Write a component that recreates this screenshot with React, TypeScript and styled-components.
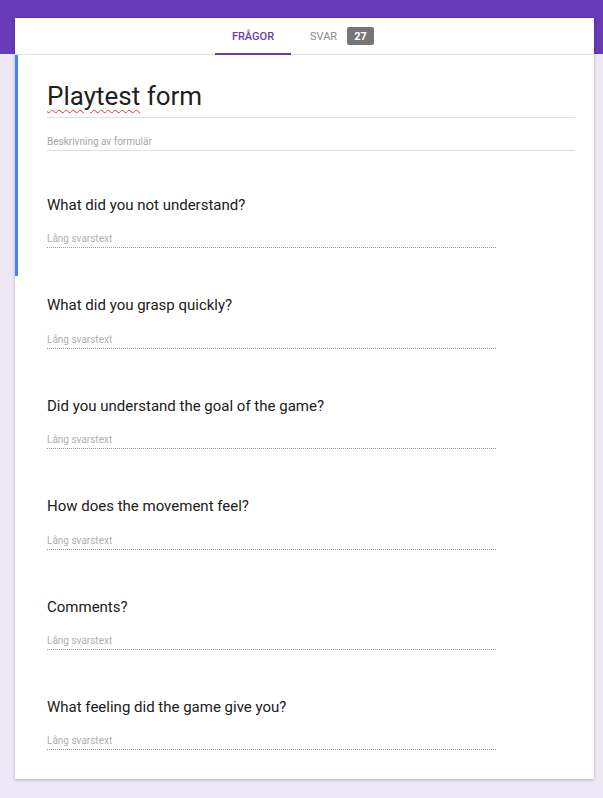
import React from 'react';
import styled, { createGlobalStyle } from 'styled-components';

const GlobalStyle = createGlobalStyle`
  html, body {
    margin: 0;
    padding: 0;
    background: #ede7f6;
    font-family: Roboto, "Noto Sans", "Liberation Sans", sans-serif;
  }
`;

const Page = styled.div`
  min-height: 798px;
  box-sizing: border-box;
  padding: 18px 9px 18px 15px;
  background: linear-gradient(#673ab7 0, #673ab7 54px, #ede7f6 54px);
`;

const Card = styled.div`
  width: 579px;
  background: #fff;
  box-shadow: 0 1px 3px rgba(0, 0, 0, 0.25);
  padding-bottom: 1px;
`;

const TabBar = styled.div`
  height: 36px;
  display: flex;
  justify-content: center;
  border-bottom: 1px solid #e0e0e0;
`;

const Tab = styled.div<{ active?: boolean; width: number }>`
  width: ${(p) => p.width}px;
  box-sizing: border-box;
  display: flex;
  align-items: center;
  justify-content: ${(p) => (p.active ? 'center' : 'flex-start')};
  padding: ${(p) => (p.active ? '0' : '0 0 0 19px')};
  gap: 10px;
  font-size: 11px;
  font-weight: ${(p) => (p.active ? 500 : 400)};
  text-transform: uppercase;
  color: ${(p) => (p.active ? '#673ab7' : '#8a8a8a')};
  border-bottom: 2px solid ${(p) => (p.active ? '#673ab7' : 'transparent')};
  margin-bottom: -1px;
  padding-top: 1px;
`;

const Badge = styled.span`
  display: inline-flex;
  align-items: center;
  justify-content: center;
  width: 27px;
  height: 18px;
  border-radius: 2px;
  background: #767676;
  color: #fff;
  font-size: 11px;
  font-weight: 700;
`;

const Highlighted = styled.div`
  border-left: 3px solid #4285f4;
`;

const Header = styled.div`
  padding: 23px 19px 25px 29px;
`;

const Title = styled.div`
  font-size: 26px;
  line-height: 36px;
  color: rgba(0, 0, 0, 0.9);
  padding-bottom: 3px;
  border-bottom: 1px solid #e0e0e0;
`;

const Misspelled = styled.span`
  text-decoration: underline wavy #e53935;
  text-decoration-thickness: 1px;
  text-underline-offset: 4px;
`;

const Description = styled.div`
  margin-top: 17px;
  font-size: 10px;
  line-height: 14px;
  color: #a6a6a6;
  padding-bottom: 1px;
  border-bottom: 1px solid #e0e0e0;
`;

const Question = styled.div<{ inset: number }>`
  padding: 19px 0 28px ${(p) => p.inset}px;
`;

const QuestionText = styled.div`
  font-size: 15px;
  line-height: 20px;
  color: #202020;
`;

const Answer = styled.div`
  width: 449px;
  margin-top: 17.4px;
  font-size: 10px;
  line-height: 14px;
  color: #b0b0b0;
  padding-bottom: 1px;
  border-bottom: 1px dotted #9a9a9a;
`;

const questions = [
  'What did you not understand?',
  'What did you grasp quickly?',
  'Did you understand the goal of the game?',
  'How does the movement feel?',
  'Comments?',
  'What feeling did the game give you?',
];

const QuestionItem: React.FC<{ text: string; inset: number }> = ({ text, inset }) => (
  <Question inset={inset}>
    <QuestionText>{text}</QuestionText>
    <Answer>Lång svarstext</Answer>
  </Question>
);

export default function App() {
  const [first, ...rest] = questions;
  return (
    <>
      <GlobalStyle />
      <Page>
        <Card>
          <TabBar>
            <Tab active width={76}>Frågor</Tab>
            <Tab width={103}>
              Svar
              <Badge>27</Badge>
            </Tab>
          </TabBar>
          <Highlighted>
            <Header>
              <Title>
                <Misspelled>Playtest</Misspelled> form
              </Title>
              <Description>Beskrivning av formulär</Description>
            </Header>
            <QuestionItem text={first} inset={29} />
          </Highlighted>
          {rest.map((q) => (
            <QuestionItem key={q} text={q} inset={32} />
          ))}
        </Card>
      </Page>
    </>
  );
}
